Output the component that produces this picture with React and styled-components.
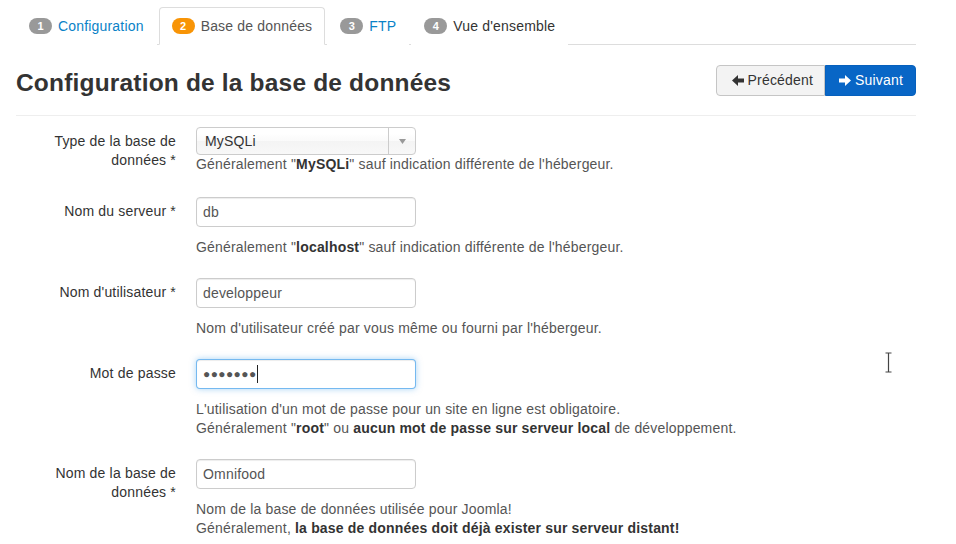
import React from "react";
import styled, { createGlobalStyle } from "styled-components";

const GlobalStyle = createGlobalStyle`
body {
  margin: 0;
  background: #fff;
  font-family: "Liberation Sans", Arial, sans-serif;
  font-size: 14px;
  letter-spacing: 0.18px;
  color: #333;
}
`;

const steps = [
  { num: 1, label: "Configuration", state: "done" },
  { num: 2, label: "Base de données", state: "active" },
  { num: 3, label: "FTP", state: "done" },
  { num: 4, label: "Vue d'ensemble", state: "todo" },
];

const ArrowIcon = ({ left }) => (
  <svg width="12" height="11" viewBox="0 0 12 11" style={{ transform: left ? "scaleX(-1)" : "none" }}>
    <path d="M0 3.5h6V0l6 5.5-6 5.5V7.5H0z" fill="currentColor" />
  </svg>
);

const App = () => {
  return (
    <Page>
      <GlobalStyle />
      <Tabs>
        {steps.map((s) => (
          <Tab key={s.num} active={s.state === "active"} state={s.state}>
            <Badge active={s.state === "active"}>{s.num}</Badge>
            {s.label}
          </Tab>
        ))}
      </Tabs>

      <Header>
        <Title>Configuration de la base de données</Title>
        <BtnGroup>
          <Btn>
            <ArrowIcon left />
            Précédent
          </Btn>
          <Btn primary>
            <ArrowIcon />
            Suivant
          </Btn>
        </BtnGroup>
      </Header>

      <Form>
        <ControlGroup tight>
          <Label>Type de la base de données *</Label>
          <Controls>
            <Select>
              <span>MySQLi</span>
              <SelectArrow>
                <svg width="7" height="5" viewBox="0 0 7 5">
                  <path d="M0 0h7L3.5 5z" fill="#999" />
                </svg>
              </SelectArrow>
            </Select>
            <Help>
              Généralement "<b>MySQLi</b>" sauf indication différente de l'hébergeur.
            </Help>
          </Controls>
        </ControlGroup>

        <ControlGroup>
          <Label>Nom du serveur *</Label>
          <Controls>
            <Input type="text" defaultValue="db" readOnly />
            <Help>
              Généralement "<b>localhost</b>" sauf indication différente de l'hébergeur.
            </Help>
          </Controls>
        </ControlGroup>

        <ControlGroup>
          <Label>Nom d'utilisateur *</Label>
          <Controls>
            <Input type="text" defaultValue="developpeur" readOnly />
            <Help>Nom d'utilisateur créé par vous même ou fourni par l'hébergeur.</Help>
          </Controls>
        </ControlGroup>

        <ControlGroup>
          <Label>Mot de passe</Label>
          <Controls>
            <PasswordField>
              <Dots>●●●●●●●</Dots>
              <Caret />
            </PasswordField>
            <Help>
              L'utilisation d'un mot de passe pour un site en ligne est obligatoire.
              <br />
              Généralement "<b>root</b>" ou <b>aucun mot de passe sur serveur local</b> de développement.
            </Help>
          </Controls>
        </ControlGroup>

        <ControlGroup>
          <Label>Nom de la base de données *</Label>
          <Controls>
            <Input type="text" defaultValue="Omnifood" readOnly />
            <Help>
              Nom de la base de données utilisée pour Joomla!
              <br />
              Généralement, <b>la base de données doit déjà exister sur serveur distant!</b>
            </Help>
          </Controls>
        </ControlGroup>
      </Form>

      <MouseCursor width="9" height="21" viewBox="0 0 9 21">
        <path d="M1 1h7M4.5 1v19M1 20h7" stroke="#fff" strokeWidth="3" fill="none" />
        <path d="M1.5 1h6M4.5 1v19M1.5 20h6" stroke="#444" strokeWidth="1.2" fill="none" />
      </MouseCursor>
    </Page>
  );
};

export default App;

const Page = styled.div`
position: relative;
width: 900px;
height: 537px;
overflow: hidden;
padding: 7px 40px 0 16px;
box-sizing: content-box;
`;

const Tabs = styled.ul`
display: flex;
margin: 0;
padding: 0;
list-style: none;
border-bottom: 1px solid #ddd;
`;

const Tab = styled.li`
display: flex;
align-items: center;
padding: 8px 12px;
line-height: 20px;
margin-right: 2px;
margin-bottom: -1px;
border: 1px solid ${(p) => (p.active ? "#ddd" : "transparent")};
border-bottom-color: ${(p) => (p.active ? "#fff" : "transparent")};
border-radius: 4px 4px 0 0;
background: #fff;
color: ${(p) => (p.state === "done" ? "#0a82c7" : p.active ? "#555" : "#333")};
cursor: pointer;
`;

const Badge = styled.span`
display: inline-block;
min-width: 9px;
padding: 0 7px;
height: 16px;
line-height: 16px;
margin-right: 6px;
border-radius: 9px;
background: ${(p) => (p.active ? "#f89406" : "#999")};
color: #fff;
font-size: 11px;
font-weight: bold;
letter-spacing: 0;
text-align: center;
`;

const Header = styled.div`
display: flex;
justify-content: space-between;
align-items: center;
margin-top: 17px;
padding-bottom: 17px;
border-bottom: 1px solid #eee;
`;

const Title = styled.h3`
margin: 0;
font-size: 24.5px;
line-height: 30px;
font-weight: bold;
color: #333;
padding-top: 6px;
`;

const BtnGroup = styled.div`
display: flex;
`;

const Btn = styled.button`
display: flex;
align-items: center;
gap: 4px;
height: 31px;
padding: 0 ${(p) => (p.primary ? "12px" : "11px")} 0 ${(p) => (p.primary ? "13px" : "15px")};
font-family: inherit;
font-size: 14px;
letter-spacing: 0.18px;
border: 1px solid ${(p) => (p.primary ? "#0660bd" : "#c5c5c5")};
border-radius: ${(p) => (p.primary ? "0 4px 4px 0" : "4px 0 0 4px")};
background: ${(p) => (p.primary ? "#0866c6" : "#f3f3f3")};
color: ${(p) => (p.primary ? "#fff" : "#333")};
cursor: pointer;
`;

const Form = styled.div`
padding-top: 11px;
`;

const ControlGroup = styled.div`
display: flex;
margin-bottom: ${(p) => (p.tight ? "23px" : "21px")};
`;

const Label = styled.label`
width: 160px;
flex-shrink: 0;
padding-top: 5px;
text-align: right;
line-height: 19px;
color: #333;
`;

const Controls = styled.div`
margin-left: 20px;
`;

const fieldBase = `
box-sizing: border-box;
width: 220px;
height: 30px;
padding: 4px 6px;
border: 1px solid #ccc;
border-radius: 4px;
background: #fff;
color: #555;
font-family: "Liberation Sans", Arial, sans-serif;
font-size: 14px;
letter-spacing: 0.18px;
line-height: 20px;
box-shadow: inset 0 1px 1px rgba(0, 0, 0, 0.075);
`;

const Input = styled.input`
${fieldBase}
display: block;
margin: 0 0 11px;
outline: none;
`;

const PasswordField = styled.div`
${fieldBase}
display: flex;
align-items: center;
margin-bottom: 11px;
border-color: rgba(82, 168, 236, 0.8);
box-shadow: inset 0 1px 1px rgba(0, 0, 0, 0.075), 0 0 6px rgba(82, 168, 236, 0.5);
`;

const Dots = styled.span`
font-size: 12px;
letter-spacing: 0.4px;
color: #555;
`;

const Caret = styled.span`
width: 1px;
height: 18px;
background: #222;
margin-left: 0;
`;

const Select = styled.div`
box-sizing: border-box;
display: flex;
align-items: center;
justify-content: space-between;
width: 220px;
height: 28px;
padding-left: 8px;
border: 1px solid #ccc;
border-radius: 4px;
background: linear-gradient(#fff 20%, #fafafa 50%, #f4f4f4 52%, #f8f8f8);
color: #333;
font-size: 14px;
`;

const SelectArrow = styled.div`
display: flex;
align-items: center;
justify-content: center;
width: 26px;
height: 100%;
border-left: 1px solid #ccc;
`;

const Help = styled.div`
line-height: 19px;
font-size: 14px;
color: #555;

b {
  color: #333;
}
`;

const MouseCursor = styled.svg`
position: absolute;
left: 884px;
top: 352px;
`;
